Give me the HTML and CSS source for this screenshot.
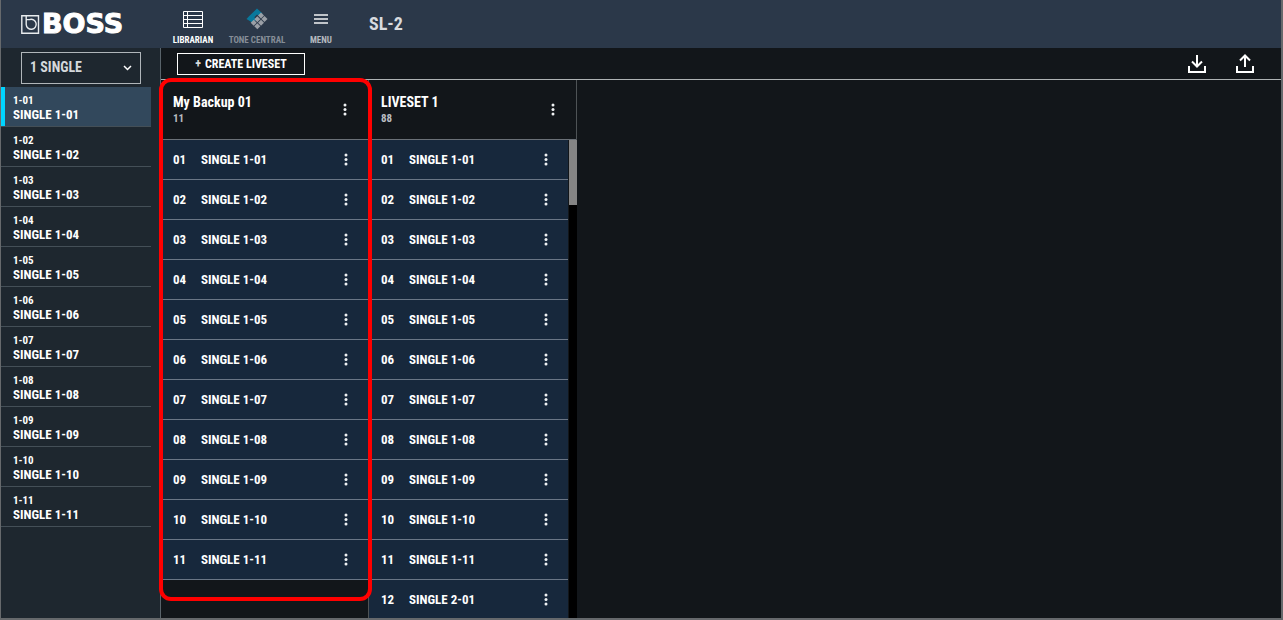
FILE: index.html
```
<!DOCTYPE html>
<html lang="en">
<head>
  <meta charset="UTF-8" />
  <meta name="viewport" content="width=device-width, initial-scale=1.0"/>
  <title>SL-2 Librarian</title>
  <link rel="stylesheet" href="styles.css">
</head>
<body>
  <div class="app">
    <header class="topbar">
      <div class="brand">
        <svg width="19" height="19" viewBox="0 0 19 19" fill="none" stroke="#e8ebee" stroke-width="1.4">
          <path d="M.8.8H17.500V18.200H.8Z"/>
          <path d="M5.200 1V9.500A5 5 0 1 0 8.500 4.600H5.200"/>
        </svg>
        <span class="wordmark">BOSS</span>
      </div>
      <nav class="nav">
        <button class="nav-item active">
          <span class="nav-icon"><svg width="20" height="17" viewBox="0 0 20 17" fill="none" stroke="#fff"><path d="M.5.5H19.500V16.500H.5ZM4.500.5V16.500M.5 4.500H19.500M.5 8.500H19.500M.5 12.500H19.500"/></svg></span>
          LIBRARIAN
        </button>
        <button class="nav-item dim">
          <span class="nav-icon"><svg width="22" height="22" viewBox="0 0 22 22">
            <path fill="#08789c" d="M11 .5 16.500 5.500 13.500 8.500 11 6.500 8.300 9.200 10.500 11.500 7 15 .5 11 3 8.200Z"/>
            <g fill="#9a9fa6">
              <path id="tile" d="M15 4.500 18 7.500 15 10.500 12 7.500Z"/>
              <use href="#tile" x="3.500" y="3.500"/>
              <use href="#tile" x="-3.700" y="3.700"/>
              <use href="#tile" x="0" y="7.200"/>
              <use href="#tile" x="-7.300" y="7.300"/>
              <use href="#tile" x="-3.700" y="10.800"/>
            </g>
          </svg></span>
          TONE CENTRAL
        </button>
        <button class="nav-item">
          <span class="nav-icon"><svg width="14" height="10" viewBox="0 0 14 10" fill="#c0c4c9"><path d="M0 0H14V2H0ZM0 4H14V6H0ZM0 8H14V10H0Z"/></svg></span>
          MENU
        </button>
      </nav>
      <h1 class="device">SL-2</h1>
    </header>

    <div class="content">
      <aside class="sidebar">
        <div class="bank">
          <select class="bank-select" aria-label="Bank">
            <option>1 SINGLE</option>
          </select>
          <svg class="bank-arrow" width="9" height="6" viewBox="0 0 9 6" fill="none" stroke="#fff" stroke-width="1.5"><path d="M1 1 4.500 4.500 8 1"/></svg>
        </div>
        <ul class="patches" id="patches"></ul>
      </aside>

      <main class="main">
        <div class="toolbar">
          <button class="create"><span class="plus">+</span>CREATE LIVESET</button>
          <div class="tools">
            <button class="tool" aria-label="Import">
              <svg width="18" height="18" viewBox="0 0 18 18" fill="none" stroke="#fff" stroke-width="2"><path d="M1 11V17H17V11M9 0V11M4 6.500 9 11.500 14 6.500"/></svg>
            </button>
            <button class="tool" aria-label="Export">
              <svg width="18" height="19" viewBox="0 0 18 19" fill="none" stroke="#fff" stroke-width="2"><path d="M1 12V18H17V12M9 13V1.500M4 6.500 9 1.500 14 6.500"/></svg>
            </button>
          </div>
        </div>

        <div class="livesets">
          <section class="liveset">
            <div class="liveset-group">
              <div class="liveset-head">
                <div>
                  <h2>My Backup 01</h2>
                  <p>11</p>
                </div>
                <button class="more" aria-label="Liveset menu"><svg width="4" height="13" viewBox="0 0 4 13"><circle cx="2" cy="2" r="1.500"/><circle cx="2" cy="6.500" r="1.500"/><circle cx="2" cy="11" r="1.500"/></svg></button>
              </div>
              <ul class="tones" id="backupTones"></ul>
              <div class="highlight"></div>
            </div>
          </section>

          <section class="liveset">
            <div class="liveset-head">
              <div>
                <h2>LIVESET 1</h2>
                <p>88</p>
              </div>
              <button class="more" aria-label="Liveset menu"><svg width="4" height="13" viewBox="0 0 4 13"><circle cx="2" cy="2" r="1.500"/><circle cx="2" cy="6.500" r="1.500"/><circle cx="2" cy="11" r="1.500"/></svg></button>
            </div>
            <div class="scroller">
              <ul class="tones" id="livesetTones"></ul>
              <div class="track"><div class="thumb"></div></div>
            </div>
          </section>
        </div>
      </main>
    </div>
  </div>

  <script>
    const names = [];
    for (let i = 1; i <= 11; i++) {
      names.push("1-" + String(i).padStart(2, "0"));
    }

    document.getElementById("patches").innerHTML = names.map((name, i) => `
      <li><button class="patch${i === 0 ? " selected" : ""}">
        <span class="patch-no">${name}</span>
        <span>SINGLE ${name}</span>
      </button></li>`).join("");

    function fillTones(id, list) {
      document.getElementById(id).innerHTML = list.map((name, i) => `
        <li class="tone">
          <span class="tone-no">${String(i + 1).padStart(2, "0")}</span>
          <span class="tone-name">SINGLE ${name}</span>
          <button class="more" aria-label="Tone menu"><svg width="4" height="13" viewBox="0 0 4 13"><circle cx="2" cy="2" r="1.500"/><circle cx="2" cy="6.500" r="1.500"/><circle cx="2" cy="11" r="1.500"/></svg></button>
        </li>`).join("");
    }

    fillTones("backupTones", names);
    fillTones("livesetTones", names.concat("2-01"));
  </script>
</body>
</html>
```
FILE: styles.css
```
* {
  box-sizing: border-box;
}

body {
  margin: 0;
  background: #12161a;
  color: #fff;
  font-family: "Roboto Condensed", Roboto, sans-serif;
  font-size: 13px;
  font-weight: bold;
}

button,
select {
  margin: 0;
  padding: 0;
  border: none;
  background: none;
  color: inherit;
  font: inherit;
  cursor: pointer;
}

h1, h2, p, ul {
  margin: 0;
  padding: 0;
  font-weight: bold;
}

ul {
  list-style: none;
}

svg {
  display: block;
}

.app {
  display: flex;
  flex-direction: column;
  height: 100vh;
  border: solid #66696c;
  border-width: 0 2px 2px 1px;
  overflow: hidden;
}

.topbar {
  display: flex;
  align-items: center;
  flex: none;
  height: 48px;
  background: #2b3849;
}

.brand {
  display: flex;
  align-items: center;
  gap: 2px;
  width: 160px;
  padding-left: 20px;
}

.wordmark {
  font-family: "DejaVu Sans", sans-serif;
  font-size: 27px;
  line-height: 28px;
  -webkit-text-stroke: 1px #fff;
}

.nav {
  display: flex;
}

.nav-item {
  width: 64px;
  height: 46px;
  padding-top: 6px;
  color: #b4b8be;
  font-size: 9px;
  line-height: 12px;
  white-space: nowrap;
}

.nav-icon {
  display: flex;
  align-items: center;
  justify-content: center;
  height: 22px;
  margin-bottom: 4px;
}

.nav-item.active {
  color: #fff;
}

.nav-item.dim {
  color: #868d97;
}

.device {
  margin-left: 16px;
  color: #d8dbdf;
  font-size: 18px;
  line-height: 20px;
}

.content {
  display: flex;
  flex: 1;
  min-height: 0;
}

.sidebar {
  flex: none;
  width: 160px;
  padding-top: 4px;
  background: #1e272f;
  border-right: 1px solid #59636a;
}

.bank {
  display: grid;
  width: 120px;
  height: 32px;
  margin: 0 0 3px 20px;
}

.bank-select,
.bank-arrow {
  grid-area: 1 / 1;
}

.bank-select {
  appearance: none;
  padding: 0 0 2px 8px;
  border: 1px solid #b0b6ba;
  border-radius: 0;
  color: #d5d9dc;
  font-size: 14px;
}

.bank-arrow {
  place-self: center end;
  margin-right: 9px;
  pointer-events: none;
}

.patches {
  width: 150px;
}

.patch {
  display: flex;
  flex-direction: column;
  width: 100%;
  height: 40px;
  padding: 7px 12px 4px;
  border-bottom: 1px solid #444f57;
  line-height: 14px;
  text-align: left;
}

.patch.selected {
  background: #32485c;
  box-shadow: inset 4px 0 #00d4ff;
}

.patch-no {
  font-size: 11px;
}

.main {
  display: flex;
  flex-direction: column;
  flex: 1;
  min-width: 0;
}

.toolbar {
  display: flex;
  align-items: center;
  justify-content: space-between;
  flex: none;
  height: 32px;
  padding: 0 24px 0 16px;
  border-bottom: 1px solid #aeb2b4;
}

.create {
  width: 128px;
  height: 22px;
  border: 1px solid #fff;
  font-size: 12px;
}

.plus {
  margin-right: 4px;
  color: #d5d9dc;
}

.tools {
  display: flex;
  gap: 24px;
}

.tool {
  display: flex;
  align-items: center;
  justify-content: center;
  width: 24px;
  height: 24px;
}

.livesets {
  display: flex;
  flex: 1;
  min-height: 0;
}

.liveset {
  display: flex;
  flex-direction: column;
  width: 208px;
  border-right: 1px solid #4e5356;
}

.liveset-group {
  position: relative;
}

.liveset-head {
  display: flex;
  align-items: center;
  justify-content: space-between;
  flex: none;
  height: 60px;
  padding: 0 13px 0 12px;
  border-bottom: 1px solid #6a7077;
}

.liveset-head h2 {
  font-size: 14px;
  line-height: 18px;
}

.liveset-head p {
  color: #b9bdc1;
  font-size: 11px;
  line-height: 16px;
}

.more {
  display: flex;
  align-items: center;
  justify-content: center;
  width: 20px;
  height: 24px;
  fill: #f0f2f4;
}

.scroller {
  display: flex;
  flex: 1;
  min-height: 0;
  margin-right: -1px;
  overflow: hidden;
}

.tones {
  flex: 1;
}

.tone {
  display: flex;
  align-items: center;
  height: 40px;
  padding: 0 12px;
  background: #17283c;
  border-bottom: 1px solid #6a7686;
}

.tone-no {
  width: 28px;
}

.tone-name {
  flex: 1;
}

.track {
  width: 8px;
  margin-left: 1px;
  background: #000;
}

.thumb {
  height: 65px;
  background: #858585;
}

/* frame around the restored backup, reaches a little outside the column */
.highlight {
  position: absolute;
  inset: -2px -4px -21px -2px;
  border: 4px solid #f00;
  border-radius: 12px;
  pointer-events: none;
}
```
